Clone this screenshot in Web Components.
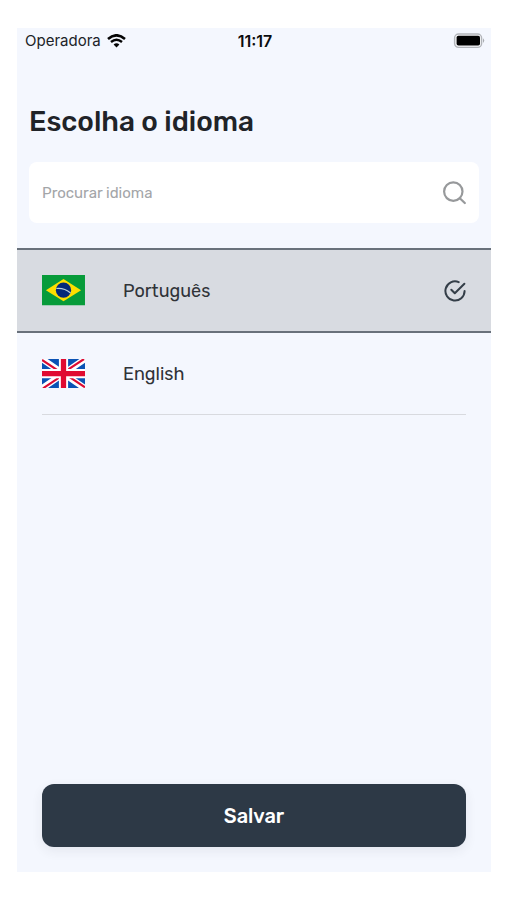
<!DOCTYPE html>
<html lang="pt">
<head>
<meta charset="utf-8">
<meta name="viewport" content="width=device-width, initial-scale=1">
<title>Escolha o idioma</title>
<style>
html, body { height: 100%; }
body { margin: 0; background: #fff; font-family: Rubik, Inter, "Liberation Sans", sans-serif; color: #202328; }
</style>
</head>
<body>
<language-screen></language-screen>

<script>
function define(name, html, setup) {
  const template = document.createElement('template');
  template.innerHTML = html;
  customElements.define(name, class extends HTMLElement {
    constructor() {
      super();
      this.attachShadow({ mode: 'open' }).append(template.content.cloneNode(true));
    }
    connectedCallback() { if (setup) setup(this, this.shadowRoot); }
  });
}

define('status-bar', `
<style>
:host { display: grid; grid-template-columns: 1fr auto 1fr; align-items: center; height: 26px; padding: 0 6px 0 8px; font-family: Inter, "Liberation Sans", sans-serif; font-size: 15px; line-height: 20px; }
.carrier { display: flex; align-items: center; gap: 6px; }
time { font-size: 16px; font-weight: 600; color: #0b0c0e; }
.battery { justify-self: end; }
svg { display: block; }
</style>
<div class="carrier"><span>Operadora</span>
<svg width="19" height="14" viewBox="0 0 19 14" fill="none" stroke="#050505" aria-hidden="true"><path d="M1 4.9Q9.5-2.3 18 4.9" stroke-width="2.6"/><path d="M4 8Q9.5 3.3 15 8" stroke-width="2.4"/><path d="M6.6 10.5 9.5 13.6l2.9-3.1Q9.5 8.2 6.6 10.5Z" fill="#050505" stroke="none"/></svg></div>
<time>11:17</time>
<svg class="battery" width="32" height="16" viewBox="0 0 32 16" aria-hidden="true"><rect x="1.6" y="1" width="27" height="13.4" rx="4" fill="#f4f5f7" stroke="#b2b5ba" stroke-width="1.4"/><rect x="3.6" y="2.8" width="23.4" height="9.8" rx="1.8" fill="#000"/><path d="M30 5.2q2.4 2.4 0 4.8z" fill="#a8abb0"/></svg>
`);

define('search-field', `
<style>
:host { display: block; }
label { display: flex; align-items: center; height: 61px; box-sizing: border-box; padding: 0 13px; border-radius: 8px; background: #fff; }
label:focus-within { outline: 1px solid #9ca3ab; }
input { flex: 1; min-width: 0; border: 0; padding: 0; outline: 0; background: none; font: 400 15px/20px Rubik, Inter, "Liberation Sans", sans-serif; color: #202328; }
input::placeholder { color: #a3a5a8; opacity: 1; }
svg { flex: none; }
</style>
<label><input type="text" placeholder="Procurar idioma" aria-label="Procurar idioma">
<svg width="24" height="24" viewBox="0 0 24 24" fill="none" stroke="#97999b" stroke-width="2.2" stroke-linecap="round" aria-hidden="true"><circle cx="11.3" cy="10.6" r="9.2"/><path d="m17.8 17.2 5 4.8"/></svg></label>
`);

define('flag-icon', `
<style>
:host { display: block; width: 43px; }
svg { display: none; width: 100%; }
:host([country="br"]) .br, :host([country="gb"]) .gb { display: block; }
</style>
<svg class="br" viewBox="0 0 44 31" aria-hidden="true"><path fill="#079b3a" d="M0 0h44v31H0z"/><path fill="#fede00" d="M4 15.5 22 4l18 11.5L22 27z"/><circle cx="22" cy="15.5" r="7.8" fill="#052879"/><path d="M14.7 13.8q8.2-.8 14.5 4.6" fill="none" stroke="#b9cfdc" stroke-width="1.2"/></svg>
<svg class="gb" viewBox="0 0 44 30" aria-hidden="true"><path fill="#0b53b4" d="M0 0h44v30H0z"/><path d="m0 0 44 30M44 0 0 30" stroke="#fff" stroke-width="6.4"/><path d="M0 1 18 13M44 29 26 17M43 0 25 12M1 30l18-12" stroke="#dc0b32" stroke-width="2.2"/><path d="M22 0v30M0 15h44" stroke="#fff" stroke-width="9.4"/><path d="M22 0v30M0 15h44" stroke="#e00b31" stroke-width="5.4"/></svg>
`);

define('language-option', `
<style>
:host { display: block; }
label { display: flex; align-items: center; box-sizing: border-box; height: 82px; margin: 0 25px; border-bottom: 1px solid #d8dadf; font-size: 18px; line-height: 24px; color: #303338; cursor: pointer; }
.name { flex: 1; margin-left: 38px; }
input { appearance: none; position: absolute; margin: 0; width: 1px; height: 1px; }
svg { display: none; }
:host([selected]) label { height: 85px; margin: 0; padding: 0 25px; border-top: 2px solid #69717b; border-bottom: 2px solid #69717b; background: #d8dbe1; }
:host([selected]) svg { display: block; }
label:focus-within .name { text-decoration: underline; }
</style>
<label><input type="radio" name="language"><slot name="flag"></slot><span class="name"><slot></slot></span>
<svg width="22" height="22" viewBox="0 0 22 22" fill="none" stroke="#343e48" stroke-width="2" stroke-linecap="round" stroke-linejoin="round" aria-hidden="true"><path d="M14.7 2.1A9.6 9.6 0 1 0 20.6 11"/><path d="m7.3 9.8 3.5 3.5L20.4 3.7"/></svg></label>
`, (host, root) => {
  const radio = root.querySelector('input');
  radio.checked = host.hasAttribute('selected');
  radio.addEventListener('change', () => {
    for (const option of host.parentNode.querySelectorAll('language-option')) {
      option.toggleAttribute('selected', option === host);
      option.shadowRoot.querySelector('input').checked = option === host;
    }
  });
});

define('save-button', `
<style>
:host { display: block; }
button { display: block; width: 100%; height: 63px; border: 0; border-radius: 12px; background: #2d3946; color: #fff; font: 500 20px/24px Rubik, Inter, "Liberation Sans", sans-serif; box-shadow: 0 4px 12px rgba(45, 57, 70, .08); cursor: pointer; }
</style>
<button type="button"><slot></slot></button>
`);

define('language-screen', `
<style>
:host { display: flex; box-sizing: border-box; min-height: 100%; height: 100%; padding: 28px 16px 28px 17px; }
main { flex: 1; min-width: 0; display: flex; flex-direction: column; background: #f4f7fe; }
h1 { margin: 50px 12px 22px; font-size: 28px; line-height: 36px; font-weight: 500; }
search-field { margin: 0 12px; }
.languages { margin-top: 25px; }
save-button { margin: auto 25px 25px; }
</style>
<main>
<status-bar></status-bar>
<h1>Escolha o idioma</h1>
<search-field></search-field>
<div class="languages" role="radiogroup" aria-label="Idioma">
<language-option selected><flag-icon slot="flag" country="br"></flag-icon>Português</language-option>
<language-option><flag-icon slot="flag" country="gb"></flag-icon>English</language-option>
</div>
<save-button>Salvar</save-button>
</main>
`);
</script>
</body>
</html>
